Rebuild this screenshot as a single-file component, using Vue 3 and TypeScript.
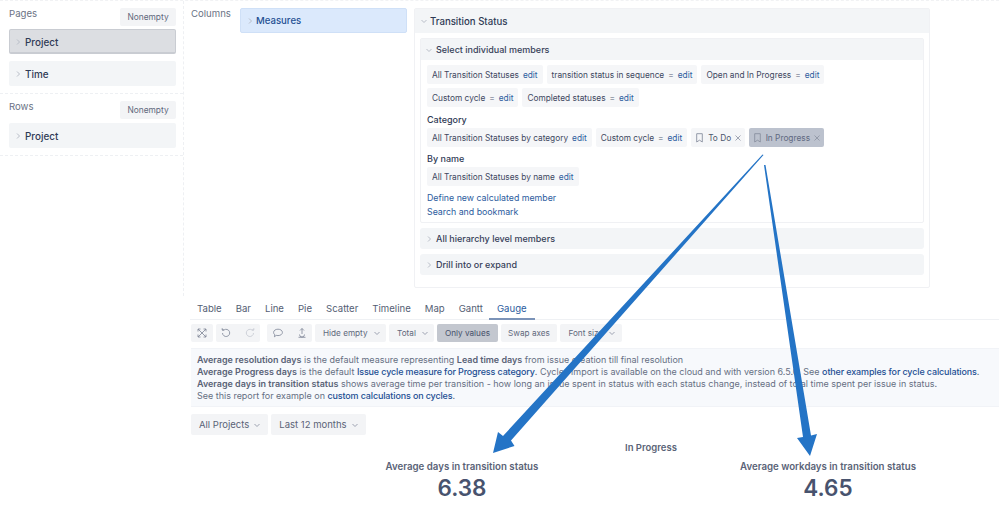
<script setup lang="ts">
interface Chip { label: string; eq?: boolean }
const rowA: Chip[] = [
  { label: 'All Transition Statuses' },
  { label: 'transition status in sequence', eq: true },
  { label: 'Open and In Progress', eq: true },
]
const rowA2: Chip[] = [
  { label: 'Custom cycle', eq: true },
  { label: 'Completed statuses', eq: true },
]
const rowB: Chip[] = [
  { label: 'All Transition Statuses by category' },
  { label: 'Custom cycle', eq: true },
]
const tabs = ['Table', 'Bar', 'Line', 'Pie', 'Scatter', 'Timeline', 'Map', 'Gantt', 'Gauge']
</script>

<template>
  <div class="page">
    <div class="top">
      <aside class="left">
        <section class="sec">
          <div class="sec-head"><span class="sec-label">Pages</span><button class="small">Nonempty</button></div>
          <div class="bar selected"><svg class="chev" viewBox="0 0 8 8"><path d="M3 1.500 5.500 4 3 6.500"/></svg>Project</div>
          <div class="bar"><svg class="chev" viewBox="0 0 8 8"><path d="M3 1.500 5.500 4 3 6.500"/></svg>Time</div>
        </section>
        <section class="sec">
          <div class="sec-head"><span class="sec-label">Rows</span><button class="small">Nonempty</button></div>
          <div class="bar"><svg class="chev" viewBox="0 0 8 8"><path d="M3 1.500 5.500 4 3 6.500"/></svg>Project</div>
        </section>
      </aside>
      <div class="cols">
        <span class="col-label">Columns</span>
        <div class="bar measures"><svg class="chev" viewBox="0 0 8 8"><path d="M3 1.500 5.500 4 3 6.500"/></svg>Measures</div>
        <div class="panel">
          <div class="panel-head"><svg class="chev" viewBox="0 0 8 8"><path d="M1.500 3 4 5.500 6.500 3"/></svg>Transition Status</div>
          <div class="panel-body">
            <div class="inner">
              <div class="inner-head"><svg class="chev" viewBox="0 0 8 8"><path d="M1.500 3 4 5.500 6.500 3"/></svg>Select individual members</div>
              <div class="inner-body">
                <div class="chips">
                  <span v-for="c in rowA" :key="c.label" class="chip">{{ c.label }}<i v-if="c.eq" class="eq">=</i><a class="edit">edit</a></span>
                </div>
                <div class="chips next-row">
                  <span v-for="c in rowA2" :key="c.label" class="chip">{{ c.label }}<i v-if="c.eq" class="eq">=</i><a class="edit">edit</a></span>
                </div>
                <div class="group-title">Category</div>
                <div class="chips">
                  <span v-for="c in rowB" :key="c.label" class="chip">{{ c.label }}<i v-if="c.eq" class="eq">=</i><a class="edit">edit</a></span>
                  <span class="chip tag">
                    <svg class="mark" viewBox="0 0 7 10"><path d="M.7.700h5.600v8.300L3.500 7.200.7 9z"/></svg>To Do
                    <svg class="close" viewBox="0 0 6 6"><path d="M.5.500l5 5M5.500.500l-5 5"/></svg>
                  </span>
                  <span class="chip tag active">
                    <svg class="mark" viewBox="0 0 7 10"><path d="M.7.700h5.600v8.300L3.500 7.200.7 9z"/></svg>In Progress
                    <svg class="close" viewBox="0 0 6 6"><path d="M.5.500l5 5M5.500.500l-5 5"/></svg>
                  </span>
                </div>
                <div class="group-title second">By name</div>
                <div class="chips">
                  <span class="chip">All Transition Statuses by name<a class="edit">edit</a></span>
                </div>
                <a class="link first-link">Define new calculated member</a>
                <a class="link">Search and bookmark</a>
              </div>
            </div>
            <div class="inner-head solo"><svg class="chev" viewBox="0 0 8 8"><path d="M3 1.500 5.500 4 3 6.500"/></svg>All hierarchy level members</div>
            <div class="inner-head solo"><svg class="chev" viewBox="0 0 8 8"><path d="M3 1.500 5.500 4 3 6.500"/></svg>Drill into or expand</div>
          </div>
        </div>
      </div>
    </div>

    <div class="report">
      <nav class="tabs">
        <span v-for="t in tabs" :key="t" class="tab" :class="{ on: t === 'Gauge' }">{{ t }}</span>
      </nav>
      <div class="toolbar">
        <div class="tool icon-tool one">
          <svg viewBox="0 0 12 12"><path d="M2 2l8 8M10 2l-8 8M2 2h2.500M2 2v2.500M10 2H7.500M10 2v2.500M2 10h2.500M2 10V7.500M10 10H7.500M10 10V7.500"/></svg>
        </div>
        <div class="tool icon-tool two">
          <svg viewBox="0 0 12 12"><path d="M2.500 6A3.600 3.600 0 1 0 4 3H2.200M2.200 1.200V3H4"/></svg>
          <svg class="faint" viewBox="0 0 12 12"><path d="M9.500 6A3.600 3.600 0 1 1 8 3h1.800M9.800 1.200V3H8"/></svg>
        </div>
        <div class="tool icon-tool three">
          <svg viewBox="0 0 12 12"><path d="M6 2.200c2.600 0 4.400 1.400 4.400 3.200S8.600 8.600 6 8.600c-.7 0-1.300-.1-1.800-.2L2.400 9.800l.4-2C2 7.200 1.600 6.300 1.600 5.400 1.600 3.600 3.400 2.200 6 2.200z"/></svg>
          <svg viewBox="0 0 12 12"><path d="M6 1.500v5.500M4 3.500 6 1.500l2 2M3.500 7.500a2.500 2.500 0 0 0 5 0M2.500 10.300h7"/></svg>
        </div>
        <div class="tool caret-tool">Hide empty<svg class="caret" viewBox="0 0 8 8"><path d="M1.500 3 4 5.500 6.500 3"/></svg></div>
        <div class="tool caret-tool">Total<svg class="caret" viewBox="0 0 8 8"><path d="M1.500 3 4 5.500 6.500 3"/></svg></div>
        <div class="tool pressed">Only values</div>
        <div class="tool">Swap axes</div>
        <div class="tool caret-tool">Font size<svg class="caret" viewBox="0 0 8 8"><path d="M1.500 3 4 5.500 6.500 3"/></svg></div>
      </div>
      <div class="info">
        <p><b>Average resolution days</b> is the default measure representing <b>Lead time days</b> from issue creation till final resolution</p>
        <p><b>Average Progress days</b> is the default <a>Issue cycle measure for Progress category</a>. Cycles import is available on the cloud and with version 6.5.0. See <a>other examples for cycle calculations</a>.</p>
        <p><b>Average days in transition status</b> shows average time per transition - how long an issue spent in status with each status change, instead of total time spent per issue in status.</p>
        <p>See this report for example on <a>custom calculations on cycles</a>.</p>
      </div>
      <div class="filters">
        <div class="filter">All Projects<svg class="caret" viewBox="0 0 8 8"><path d="M1.500 3 4 5.500 6.500 3"/></svg></div>
        <div class="filter">Last 12 months<svg class="caret" viewBox="0 0 8 8"><path d="M1.500 3 4 5.500 6.500 3"/></svg></div>
      </div>
      <div class="gauge-head">In Progress</div>
      <div class="gauges">
        <div class="gauge"><div class="g-title">Average days in transition status</div><div class="g-value">6.38</div></div>
        <div class="gauge"><div class="g-title">Average workdays in transition status</div><div class="g-value">4.65</div></div>
      </div>
    </div>

    <svg class="arrows" viewBox="0 0 999 520" width="999" height="520">
      <polygon points="763.500,155 511,440.500 514.500,446 493,453 498,432 503,436 762.500,154.500" />
      <polygon points="764,165 765.500,165 811,435.500 817,434 810,456 797,438 803,437" />
    </svg>
  </div>
</template>

<style>
html, body { margin: 0; background: #fff; }
</style>

<style scoped>
.page {
  position: relative;
  width: 999px;
  height: 520px;
  overflow: hidden;
  font-family: Inter, "Liberation Sans", sans-serif;
  font-size: 8.300px;
  color: #3d4760;
  background: #fff;
}
svg { display: block; }
.top {
  display: flex;
  height: 296px;
  border-top: 1px dashed #f1f2f4;
  box-sizing: border-box;
}
.left {
  width: 184px;
  flex: none;
  box-sizing: border-box;
  border-right: 1px dashed #eef0f3;
}
.sec {
  padding: 7px 7px 7px 9px;
  border-bottom: 1px dashed #eef0f3;
}
.sec-head {
  display: flex;
  justify-content: space-between;
  align-items: flex-start;
  height: 21px;
}
.sec + .sec .sec-head { height: 22px; }
.sec-label, .col-label {
  font-size: 9.600px;
  line-height: 11px;
  color: #6b7385;
}
.small {
  width: 56px;
  height: 18px;
  padding: 0;
  border: 0;
  border-radius: 2px;
  background: #f3f4f6;
  color: #5f687c;
  font: 8.400px Inter, sans-serif;
}
.bar {
  display: flex;
  align-items: center;
  height: 25px;
  padding-top: 1px;
  box-sizing: border-box;
  border-radius: 2px;
  background: #f3f5f7;
  font-size: 9.900px;
  font-weight: 500;
  color: #2f3a55;
}
.bar + .bar { margin-top: 7px; }
.selected {
  background: #dcdee2;
  border: 1px solid #c9ccd2;
  border-bottom-width: 2px;
}
.chev {
  width: 8px;
  height: 8px;
  margin: 0 3px 0 5px;
  flex: none;
  fill: none;
  stroke: #b9bec8;
  stroke-width: 1;
}
.selected .chev { margin-left: 4px; }
.cols {
  flex: 1;
  display: flex;
  align-items: flex-start;
  padding: 7px 0 0 7px;
  min-width: 0;
}
.col-label { width: 49px; flex: none; }
.measures {
  width: 167px;
  flex: none;
  padding-top: 0;
  background: #dbe9fc;
  border: 1px solid #cfe0f7;
  color: #234f93;
  font-size: 9.600px;
}
.measures .chev { margin-right: 2px; }
.panel {
  width: 516px;
  flex: none;
  margin-left: 7px;
  height: 280px;
  box-sizing: border-box;
  border: 1px solid #f0f1f4;
  border-radius: 2px;
}
.panel-head {
  display: flex;
  align-items: center;
  height: 24px;
  background: #f3f5f7;
  font-size: 9.650px;
  font-weight: 500;
  color: #2f3a55;
}
.panel-head .chev { margin-right: 2px; margin-left: 5px; }
.panel-body { padding: 5px 5px 0; }
.inner {
  height: 185px;
  box-sizing: border-box;
  border: 1px solid #f0f1f4;
  border-radius: 2px;
}
.inner-head {
  display: flex;
  align-items: center;
  height: 21px;
  background: #f3f5f7;
  font-size: 9px;
  font-weight: 500;
  color: #374159;
}
.inner > .inner-head .chev { margin-left: 4px; }
.solo {
  margin-top: 5px;
  border-radius: 3px;
}
.inner-body { padding: 5px 6px 0; }
.chips {
  display: flex;
  gap: 4px;
}
.next-row { margin-top: 4px; }
.chip {
  display: flex;
  align-items: center;
  height: 19px;
  padding: 0 5px;
  border-radius: 2px;
  background: #f5f6f8;
  color: #3d4760;
  font-size: 8.300px;
  white-space: nowrap;
}
.eq { font-style: normal; color: #8a91a0; margin-left: 4px; }
.edit { color: #2c5c9e; margin-left: 4px; }
.group-title {
  margin: 7px 0 3px;
  font-size: 9px;
  line-height: 11px;
  font-weight: 500;
  color: #2f3a55;
}
.second { margin-top: 6px; }
.tag { color: #4c566d; padding-right: 4px; }
.active { background: #bcc2ce; color: #5f6981; }
.mark {
  width: 7px;
  height: 10px;
  margin-right: 5px;
  fill: none;
  stroke: #8a91a0;
  stroke-width: .9;
}
.close {
  width: 6px;
  height: 6px;
  margin-left: 3.500px;
  fill: none;
  stroke: #8a91a0;
  stroke-width: .8;
}
.link {
  display: block;
  color: #2c5c9e;
  font-size: 8.800px;
  line-height: 13.500px;
}
.first-link { margin-top: 5px; }
.report { padding-left: 191px; }
.tabs {
  display: flex;
  height: 24px;
  margin-left: -1px;
  border-bottom: 1px solid #eff1f4;
  box-sizing: border-box;
}
.tab {
  padding: 7px 7px 0;
  font-size: 9.600px;
  line-height: 12px;
  color: #545e74;
}
.tab.on {
  padding: 7px 8px 0;
  margin-left: -1px;
  color: #2c5c9e;
  border-bottom: 2px solid #7b93b8;
  height: 24px;
  box-sizing: border-box;
}
.toolbar {
  display: flex;
  gap: 3px;
  margin-top: 4px;
}
.tool {
  display: flex;
  align-items: center;
  justify-content: center;
  height: 18px;
  padding: 0 7.500px;
  box-sizing: border-box;
  border-radius: 2px;
  background: #f3f4f6;
  color: #5f687c;
  font-size: 8.200px;
}
.pressed { background: #c3c7cf; color: #46506a; }
.icon-tool { padding: 0; gap: 12px; }
.icon-tool svg {
  width: 12px;
  height: 12px;
  fill: none;
  stroke: #7c8496;
  stroke-width: .8;
}
.icon-tool svg.faint { stroke: #c4c8d0; }
.one { width: 22px; }
.two { width: 44px; margin-right: 4px; }
.three { width: 45px; }
.caret-tool { gap: 5px; padding: 0 5.500px 0 8px; }
.caret {
  width: 8px;
  height: 8px;
  fill: none;
  stroke: #868da0;
  stroke-width: .8;
}
.info {
  height: 59px;
  margin-top: 6px;
  padding: 5px 0 0 6px;
  box-sizing: border-box;
  background: #f7f9fc;
  border-top: 1px solid #f1f3f7;
  border-bottom: 1px solid #f1f3f7;
  color: #656e82;
  font-size: 8.970px;
  line-height: 12.100px;
  white-space: nowrap;
}
.info p { margin: 0; }
.info b { font-weight: 600; color: #5a6377; }
.info a { font-weight: 500; color: #234f93; letter-spacing: -.13px; }
.filters {
  display: flex;
  gap: 3px;
  margin-top: 7px;
}
.filter {
  display: flex;
  align-items: center;
  gap: 4px;
  height: 21px;
  padding: 0 7px 0 8px;
  border-radius: 2px;
  background: #f3f4f6;
  color: #5a6377;
  font-size: 9.500px;
}
.gauge-head {
  margin: 7px 0 0 434px;
  font-size: 9.500px;
  line-height: 12px;
  font-weight: 600;
  color: #5a6377;
}
.gauges {
  display: grid;
  grid-template-columns: 366px 366px;
  margin: 7px 0 0 88px;
}
.gauge { text-align: center; }
.g-title {
  font-size: 9.700px;
  line-height: 12px;
  font-weight: 600;
  color: #5a6377;
}
.g-value {
  font-size: 22.500px;
  line-height: 30px;
  font-weight: 600;
  color: #48536e;
}
.arrows {
  position: absolute;
  left: 0;
  top: 0;
  pointer-events: none;
  fill: #2474c6;
}
</style>
